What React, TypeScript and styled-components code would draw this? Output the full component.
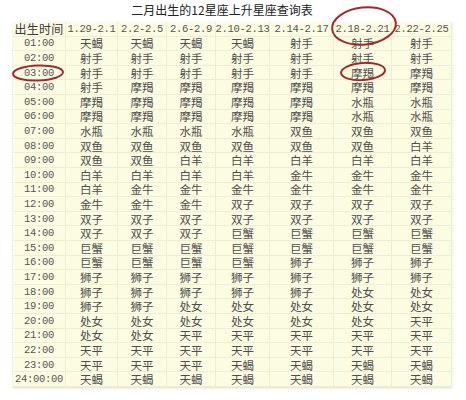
import React from 'react';
import styled, { createGlobalStyle } from 'styled-components';

const GlobalStyle = createGlobalStyle`
  html, body {
    margin: 0;
    padding: 0;
    background: #ffffff;
  }
`;

const columns = ['1.29-2.1', '2.2-2.5', '2.6-2.9', '2.10-2.13', '2.14-2.17', '2.18-2.21', '2.22-2.25'];
const widths = [53, 52, 49, 49, 54, 64, 58, 60];

// one row per hour, signs listed per date range
const rows: [string, string[]][] = [
  ['01:00', ['天蝎', '天蝎', '天蝎', '天蝎', '射手', '射手', '射手']],
  ['02:00', ['射手', '射手', '射手', '射手', '射手', '射手', '射手']],
  ['03:00', ['射手', '射手', '射手', '射手', '射手', '摩羯', '摩羯']],
  ['04:00', ['射手', '摩羯', '摩羯', '摩羯', '摩羯', '摩羯', '摩羯']],
  ['05:00', ['摩羯', '摩羯', '摩羯', '摩羯', '摩羯', '水瓶', '水瓶']],
  ['06:00', ['摩羯', '摩羯', '摩羯', '摩羯', '摩羯', '水瓶', '水瓶']],
  ['07:00', ['水瓶', '水瓶', '水瓶', '水瓶', '双鱼', '双鱼', '双鱼']],
  ['08:00', ['双鱼', '双鱼', '双鱼', '双鱼', '双鱼', '双鱼', '白羊']],
  ['09:00', ['双鱼', '双鱼', '白羊', '白羊', '白羊', '白羊', '白羊']],
  ['10:00', ['白羊', '白羊', '白羊', '白羊', '金牛', '金牛', '金牛']],
  ['11:00', ['白羊', '金牛', '金牛', '金牛', '金牛', '金牛', '金牛']],
  ['12:00', ['金牛', '金牛', '金牛', '双子', '双子', '双子', '双子']],
  ['13:00', ['双子', '双子', '双子', '双子', '双子', '双子', '双子']],
  ['14:00', ['双子', '双子', '双子', '巨蟹', '巨蟹', '巨蟹', '巨蟹']],
  ['15:00', ['巨蟹', '巨蟹', '巨蟹', '巨蟹', '巨蟹', '巨蟹', '巨蟹']],
  ['16:00', ['巨蟹', '巨蟹', '巨蟹', '巨蟹', '狮子', '狮子', '狮子']],
  ['17:00', ['狮子', '狮子', '狮子', '狮子', '狮子', '狮子', '狮子']],
  ['18:00', ['狮子', '狮子', '狮子', '狮子', '狮子', '处女', '处女']],
  ['19:00', ['狮子', '狮子', '处女', '处女', '处女', '处女', '处女']],
  ['20:00', ['处女', '处女', '处女', '处女', '处女', '处女', '天平']],
  ['21:00', ['处女', '处女', '天平', '天平', '天平', '天平', '天平']],
  ['22:00', ['天平', '天平', '天平', '天平', '天平', '天平', '天平']],
  ['23:00', ['天平', '天平', '天平', '天蝎', '天蝎', '天蝎', '天蝎']],
  ['24:00:00', ['天蝎', '天蝎', '天蝎', '天蝎', '天蝎', '天蝎', '天蝎']],
];

export default function App() {
  return (
    <>
      <GlobalStyle />
      <Page>
        <Title>二月出生的12星座上升星座查询表</Title>
        <Grid>
          <HeadCell $cjk>出生时间</HeadCell>
          {columns.map(c => (
            <HeadCell key={c}>{c}</HeadCell>
          ))}
          {rows.map(([time, signs]) => (
            <React.Fragment key={time}>
              <TimeCell>{time}</TimeCell>
              {signs.map((s, i) => (
                <SignCell key={i}>{s}</SignCell>
              ))}
            </React.Fragment>
          ))}
        </Grid>
        <Marks width="466" height="400" viewBox="0 0 466 400">
          <ellipse cx="38" cy="73" rx="25" ry="7.5" transform="rotate(-2 38 73)" />
          <ellipse cx="364" cy="26" rx="32" ry="18.5" transform="rotate(-6 364 26)" />
          <ellipse cx="363" cy="71.5" rx="22" ry="8.5" transform="rotate(-4 363 71.5)" />
        </Marks>
      </Page>
    </>
  );
}

const Page = styled.div`
  position: relative;
  width: 466px;
  height: 400px;
  background: #ffffff;
  overflow: hidden;
`;

const Title = styled.div`
  height: 22px;
  line-height: 20px;
  padding-right: 22px;
  text-align: center;
  font-family: 'Noto Sans CJK SC', sans-serif;
  font-size: 12px;
  color: #222;
`;

const Grid = styled.div`
  display: grid;
  grid-template-columns: ${widths.map(w => `${w}px`).join(' ')};
  grid-template-rows: 14.7px;
  grid-auto-rows: 14.6px;
  width: 439px;
  margin-left: 13px;
  background: #fcfce2;
  box-shadow: 0 1px 2px rgba(200, 200, 170, 0.6);
`;

const Cell = styled.div`
  display: flex;
  align-items: center;
  justify-content: center;
  white-space: nowrap;
  box-sizing: border-box;
  border-right: 1px solid #eeeed6;
  border-bottom: 1px solid #eeeed6;
  overflow: visible;
`;

const HeadCell = styled(Cell)<{ $cjk?: boolean }>`
  font-family: ${p => (p.$cjk ? "'Noto Sans CJK SC', sans-serif" : "'Liberation Mono', monospace")};
  font-size: ${p => (p.$cjk ? '12px' : '10.5px')};
  letter-spacing: ${p => (p.$cjk ? '0.2px' : '-0.3px')};
  color: ${p => (p.$cjk ? '#3a3a3a' : '#555')};
`;

const TimeCell = styled(Cell)`
  font-family: 'Liberation Mono', monospace;
  font-size: 10.5px;
  letter-spacing: -0.3px;
  color: #555;
`;

const SignCell = styled(Cell)`
  font-family: 'Noto Sans CJK SC', sans-serif;
  font-size: 11.5px;
  color: #4d4d4d;
`;

const Marks = styled.svg`
  position: absolute;
  left: 0;
  top: 0;
  pointer-events: none;
  fill: none;
  stroke: #a32a2c;
  stroke-width: 2;
`;
